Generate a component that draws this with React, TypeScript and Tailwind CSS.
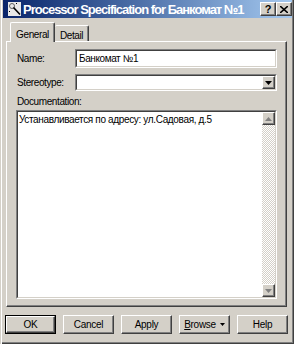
import React from "react";

const font = { fontFamily: '"Liberation Sans", Arial, sans-serif' };

function Raised({ className = "", children }: { className?: string; children?: React.ReactNode }) {
  return (
    <div
      className={
        "bg-[#D4D0C8] border border-t-white border-l-white border-r-[#404040] border-b-[#404040] shadow-[inset_-1px_-1px_0_#808080] flex items-center justify-center " +
        className
      }
    >
      {children}
    </div>
  );
}

function Sunken({ className = "", children }: { className?: string; children?: React.ReactNode }) {
  return (
    <div
      className={
        "bg-white border border-t-[#808080] border-l-[#808080] border-r-white border-b-white " + className
      }
    >
      <div className="w-full h-full border border-t-[#404040] border-l-[#404040] border-r-[#D4D0C8] border-b-[#D4D0C8] flex">
        {children}
      </div>
    </div>
  );
}

function Btn({ label, def, children }: { label?: string; def?: boolean; children?: React.ReactNode }) {
  const inner = (
    <Raised className="w-full h-full text-[10px] tracking-[-0.3px] text-black">{children ?? label}</Raised>
  );
  return def ? (
    <div className="w-[51px] h-[19px] border border-black">{inner}</div>
  ) : (
    <div className="w-[51px] h-[19px]">{inner}</div>
  );
}

export default function App() {
  return (
    <div
      style={font}
      className="w-[294px] h-[344px] bg-[#D4D0C8] flex flex-col overflow-hidden shadow-[inset_1px_0_0_#D4D0C8,inset_2px_0_0_#ffffff,inset_-1px_-1px_0_#404040,inset_-2px_-2px_0_#808080] select-none"
    >
      {/* Title bar */}
      <div className="ml-[3px] mr-[2px] h-[18px] bg-linear-to-r from-[#0A246A] to-[#A6CAF0] flex items-center pl-[5px]">
        <svg width="13" height="14" viewBox="0 0 13 14" className="shrink-0">
          <rect x="0" y="0" width="13" height="14" fill="#E8E8E8" />
          <circle cx="4" cy="4" r="2.5" fill="none" stroke="#606060" strokeWidth="1" />
          <line x1="5.5" y1="5.5" x2="12" y2="12.5" stroke="#000" strokeWidth="1.6" />
          <rect x="1" y="9" width="1" height="1" fill="#000" />
          <rect x="8" y="1" width="1" height="1" fill="#000" />
        </svg>
        <span className="ml-[2px] text-white font-bold text-[13px] tracking-[-1px] whitespace-nowrap leading-none">
          Processor Specification for Банкомат №1
        </span>
        <div className="flex-1" />
        <Raised className="w-[16px] h-[14px] text-[11px] font-bold leading-none text-black">?</Raised>
        <Raised className="w-[16px] h-[14px] text-black">
          <svg width="8" height="7" viewBox="0 0 8 7">
            <path d="M0 0 L8 7 M8 0 L0 7" stroke="#000" strokeWidth="1.6" />
          </svg>
        </Raised>
      </div>

      {/* Tabs */}
      <div className="ml-[9px] mt-[4px] h-[19px] flex items-end relative z-10">
        <div className="ml-[1px] w-[45px] h-[20px] -mb-[1px] bg-[#D4D0C8] border-l border-t border-white border-r border-r-[#404040] shadow-[inset_-1px_0_0_#808080] rounded-t-[2px] flex items-start justify-center pt-[4px] text-[10px] tracking-[-0.4px] text-black">
          General
        </div>
        <div className="w-[34px] h-[16px] bg-[#D4D0C8] border-t border-white border-r border-r-[#404040] shadow-[inset_-1px_0_0_#808080] rounded-t-[2px] flex items-start justify-center pt-[2px] text-[10px] tracking-[-0.4px] text-black">
          Detail
        </div>
      </div>

      {/* Panel */}
      <div className="ml-[6px] w-[281px] h-[266px] border border-t-white border-l-white border-r-[#404040] border-b-[#404040] shadow-[inset_-1px_-1px_0_#808080] flex flex-col pl-[10px] pr-[9px] pt-[7px]">
        <div className="flex items-center h-[19px]">
          <div className="w-[58px] text-[10px] tracking-[-0.4px] text-black">Name:</div>
          <Sunken className="flex-1 h-[19px]">
            <span className="pl-[2px] text-[10px] tracking-[-0.4px] text-black leading-[15px]">Банкомат №1</span>
          </Sunken>
        </div>
        <div className="flex items-center h-[17px] mt-[6px]">
          <div className="w-[58px] text-[10px] tracking-[-0.4px] text-black">Stereotype:</div>
          <Sunken className="flex-1 h-[17px]">
            <div className="flex-1" />
            <Raised className="w-[13px] h-full">
              <svg width="7" height="4" viewBox="0 0 7 4">
                <path d="M0 0 H7 L3.5 4 Z" fill="#000" />
              </svg>
            </Raised>
          </Sunken>
        </div>
        <div className="h-[19px] flex items-end pb-[3px] text-[10px] tracking-[-0.4px] text-black leading-none">
          Documentation:
        </div>
        <Sunken className="-ml-[1px] h-[189px]">
          <div className="flex-1 pl-[1px] pt-[2px] text-[10px] tracking-[-0.35px] text-black leading-[12px] whitespace-nowrap">
            Устанавливается по адресу: ул.Садовая, д.5
          </div>
          <div className="w-[13px] h-full flex flex-col">
            <Raised className="w-[13px] h-[13px]">
              <svg width="7" height="4" viewBox="0 0 7 4">
                <path d="M0 4 H7 L3.5 0 Z" fill="#808080" />
              </svg>
            </Raised>
            <div className="flex-1 bg-[repeating-conic-gradient(#ffffff_0_25%,#D4D0C8_0_50%)] bg-size-[2px_2px]" />
            <Raised className="w-[13px] h-[13px]">
              <svg width="7" height="4" viewBox="0 0 7 4">
                <path d="M0 0 H7 L3.5 4 Z" fill="#808080" />
              </svg>
            </Raised>
          </div>
        </Sunken>
      </div>

      {/* Buttons */}
      <div className="ml-[5px] mt-[8px] flex gap-[7px]">
        <Btn label="OK" def />
        <Btn label="Cancel" />
        <Btn label="Apply" />
        <Btn>
          <span>
            <span className="underline">B</span>rowse
          </span>
          <svg width="5" height="3" viewBox="0 0 5 3" className="ml-[4px]">
            <path d="M0 0 H5 L2.5 3 Z" fill="#000" />
          </svg>
        </Btn>
        <Btn label="Help" />
      </div>
    </div>
  );
}
